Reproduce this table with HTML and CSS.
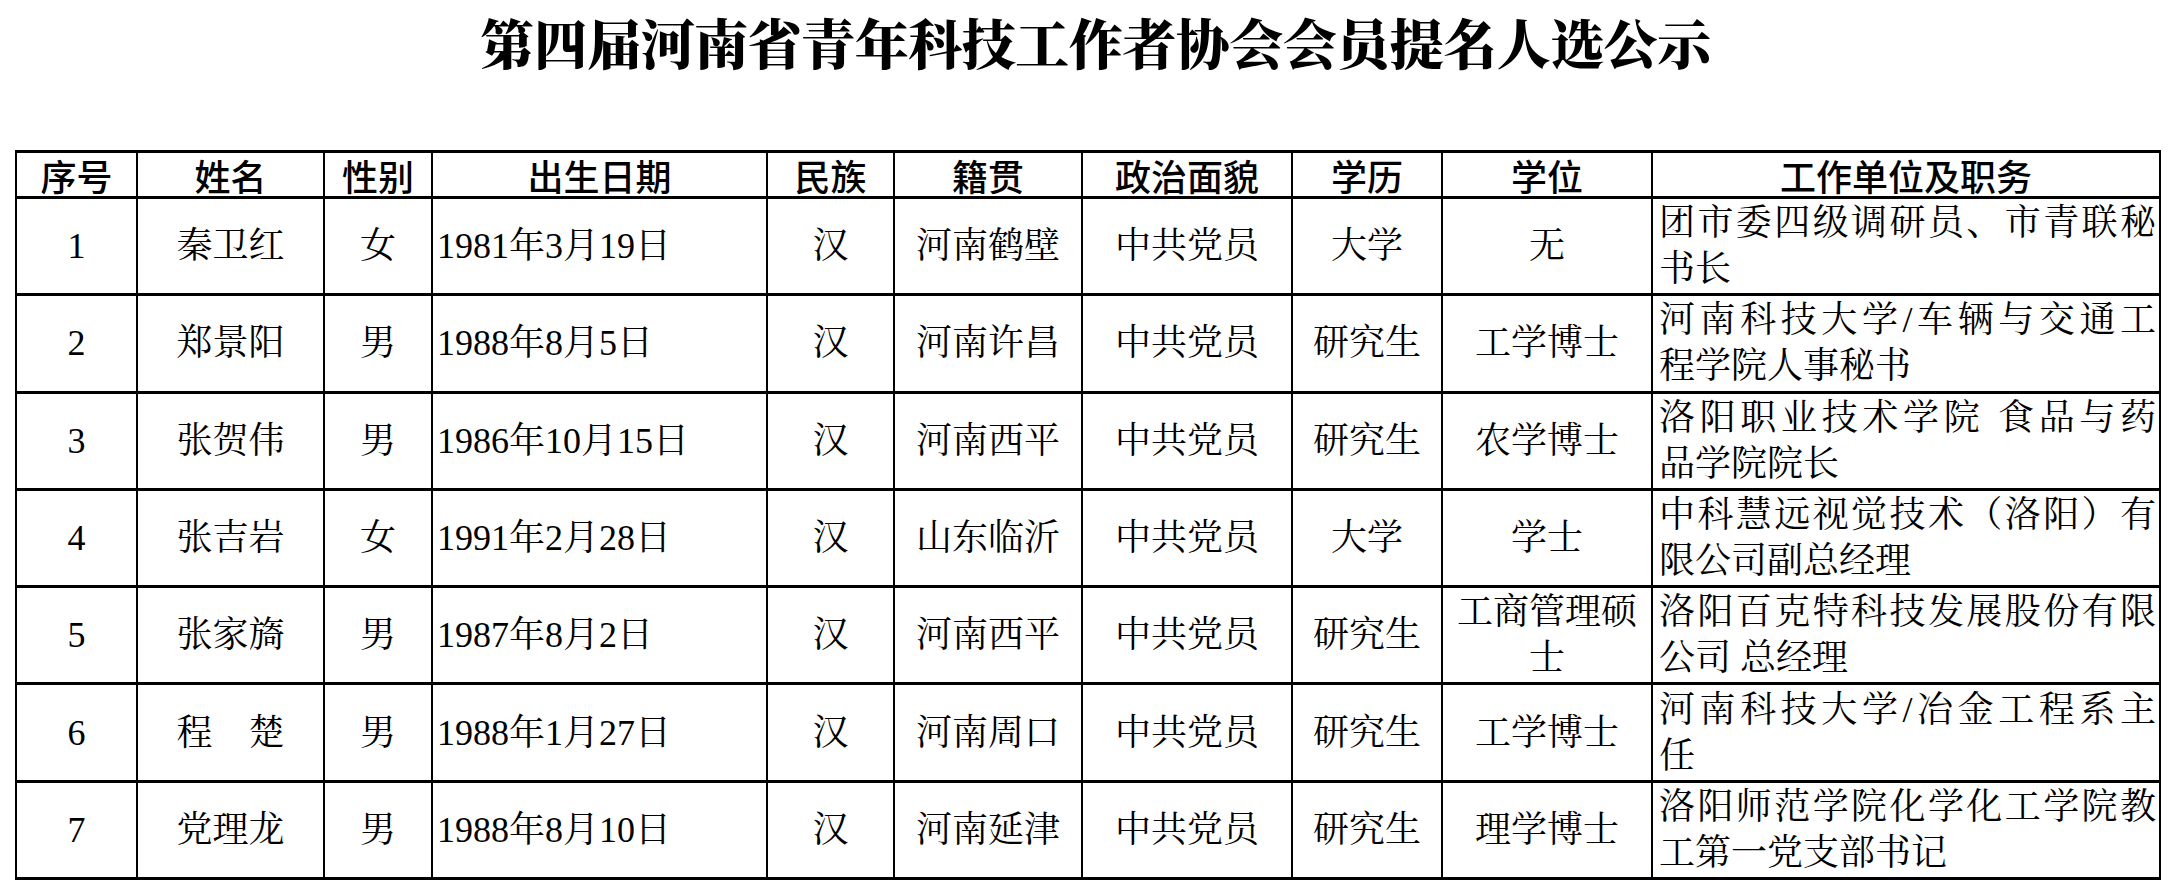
FILE: index.html
```html
<!DOCTYPE html>
<html lang="zh-CN">
<head>
<meta charset="utf-8">
<title>第四届河南省青年科技工作者协会会员提名人选公示</title>
<link rel="stylesheet" href="styles.css">
</head>
<body>
<div class="page">
  <h1 class="title">第四届河南省青年科技工作者协会会员提名人选公示</h1>
  <table class="roster">
    <colgroup>
      <col class="c-no"><col class="c-name"><col class="c-sex"><col class="c-date"><col class="c-eth">
      <col class="c-home"><col class="c-pol"><col class="c-edu"><col class="c-deg"><col class="c-work">
    </colgroup>
    <thead>
      <tr>
        <th>序号</th><th>姓名</th><th>性别</th><th>出生日期</th><th>民族</th>
        <th>籍贯</th><th>政治面貌</th><th>学历</th><th>学位</th><th>工作单位及职务</th>
      </tr>
    </thead>
    <tbody>
      <tr>
        <td>1</td><td>秦卫红</td><td>女</td><td class="date">1981年3月19日</td><td>汉</td>
        <td>河南鹤壁</td><td>中共党员</td><td>大学</td><td>无</td>
        <td class="work"><span class="jl">团市委四级调研员、市青联秘</span><span class="ln">书长</span></td>
      </tr>
      <tr>
        <td>2</td><td>郑景阳</td><td>男</td><td class="date">1988年8月5日</td><td>汉</td>
        <td>河南许昌</td><td>中共党员</td><td>研究生</td><td>工学博士</td>
        <td class="work"><span class="jl">河南科技大学/车辆与交通工</span><span class="ln">程学院人事秘书</span></td>
      </tr>
      <tr>
        <td>3</td><td>张贺伟</td><td>男</td><td class="date">1986年10月15日</td><td>汉</td>
        <td>河南西平</td><td>中共党员</td><td>研究生</td><td>农学博士</td>
        <td class="work"><span class="jl">洛阳职业技术学院 食品与药</span><span class="ln">品学院院长</span></td>
      </tr>
      <tr>
        <td>4</td><td>张吉岩</td><td>女</td><td class="date">1991年2月28日</td><td>汉</td>
        <td>山东临沂</td><td>中共党员</td><td>大学</td><td>学士</td>
        <td class="work"><span class="jl">中科慧远视觉技术（洛阳）有</span><span class="ln">限公司副总经理</span></td>
      </tr>
      <tr>
        <td>5</td><td>张家旖</td><td>男</td><td class="date">1987年8月2日</td><td>汉</td>
        <td>河南西平</td><td>中共党员</td><td>研究生</td><td>工商管理硕<br>士</td>
        <td class="work"><span class="jl">洛阳百克特科技发展股份有限</span><span class="ln">公司 总经理</span></td>
      </tr>
      <tr>
        <td>6</td><td>程　楚</td><td>男</td><td class="date">1988年1月27日</td><td>汉</td>
        <td>河南周口</td><td>中共党员</td><td>研究生</td><td>工学博士</td>
        <td class="work"><span class="jl">河南科技大学/冶金工程系主</span><span class="ln">任</span></td>
      </tr>
      <tr>
        <td>7</td><td>党理龙</td><td>男</td><td class="date">1988年8月10日</td><td>汉</td>
        <td>河南延津</td><td>中共党员</td><td>研究生</td><td>理学博士</td>
        <td class="work"><span class="jl">洛阳师范学院化学化工学院教</span><span class="ln">工第一党支部书记</span></td>
      </tr>
    </tbody>
  </table>
</div>
</body>
</html>
```
FILE: styles.css
```css
html, body {
  margin: 0;
  padding: 0;
  background: #ffffff;
  color: #000000;
}

.page {
  padding: 0 0 0 15px;
}

.title {
  margin: 0 0 66px 0;
  height: 84px;
  line-height: 84px;
  text-align: center;
  font-family: "Noto Serif CJK SC", "Noto Sans CJK SC", serif;
  font-size: 54px;
  font-weight: 900;
  letter-spacing: -0.5px;
}

.roster {
  border-collapse: collapse;
  table-layout: fixed;
  width: 2144px;
  font-family: "Liberation Serif", "Noto Serif CJK SC", "Noto Sans CJK SC", serif;
  font-size: 36px;
}

.c-no { width: 121px; }
.c-name { width: 187px; }
.c-sex { width: 108px; }
.c-date { width: 335px; }
.c-eth { width: 127px; }
.c-home { width: 188px; }
.c-pol { width: 210px; }
.c-edu { width: 150px; }
.c-deg { width: 210px; }
.c-work { width: 508px; }

.roster th,
.roster td {
  border-left: 2px solid #000;
  border-right: 2px solid #000;
  border-top: 3px solid #000;
  border-bottom: 3px solid #000;
  padding: 0;
  text-align: center;
  vertical-align: middle;
}

.roster th {
  height: 43px;
  font-family: "Noto Sans CJK SC", sans-serif;
  font-weight: 500;
  font-size: 36px;
  line-height: 40px;
}

.roster td {
  height: 94.3px;
  line-height: 46px;
  font-weight: 400;
}

.roster td.date {
  text-align: left;
  padding-left: 4px;
}

.roster td.work {
  text-align: left;
  padding: 0 3px 0 6px;
}

.jl {
  display: block;
  text-align: justify;
  text-align-last: justify;
}

.ln {
  display: block;
}
```
